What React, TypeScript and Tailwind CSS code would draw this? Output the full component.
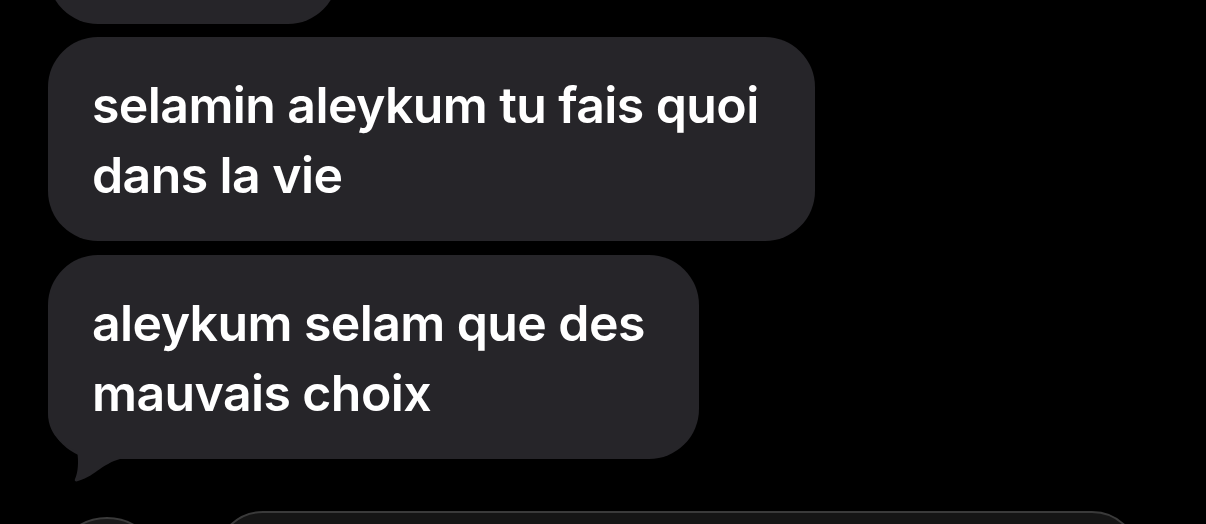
import React from 'react';

const bubble = 'bg-[#262529] text-white rounded-[50px] pl-[44px] pt-[33px] pb-[31px] text-[50px] leading-[70px] font-semibold tracking-[-0.6px]';

const Tail: React.FC = () => (
  <svg
    className="absolute left-0 bottom-[-24px]"
    width="80"
    height="80"
    viewBox="0 0 80 80"
  >
    <path
      d="M0 0 L0 10 C0 35 20 45 29 48 C31 58 30 70 27 76 C26 78 28 79 30 78 C40 75 46 70 49 68 C56 63 64 58 72 56 L72 0 Z"
      fill="#262529"
    />
  </svg>
);

const App: React.FC = () => {
  return (
    <div
      className="w-full h-[524px] bg-black overflow-hidden flex flex-col pl-[48px]"
      style={{ fontFamily: 'Inter, "Noto Sans", sans-serif' }}
    >
      {/* previous message, cut off at the top */}
      <div className="mt-[-76px] h-[100px] w-[290px] rounded-[50px] bg-[#262529] shrink-0" />

      <div className={`${bubble} mt-[13px] w-[767px] shrink-0`}>
        selamin aleykum tu fais quoi
        <br />
        dans la vie
      </div>

      <div className={`${bubble} relative mt-[14px] w-[651px] shrink-0`}>
        <Tail />
        <span className="relative">
          aleykum selam que des
          <br />
          mauvais choix
        </span>
      </div>

      {/* compose bar, mostly off screen */}
      <div className="flex items-start mt-[52px] shrink-0">
        <div className="ml-[4px] mt-[6px] w-[110px] h-[110px] rounded-full bg-[#1a1a1a] border-[2px] border-[#3a3a3a] shrink-0" />
        <div className="ml-[53px] w-[925px] h-[100px] rounded-[48px] bg-[#151515] border-[2px] border-[#3a3a3a] shrink-0" />
      </div>
    </div>
  );
};

export default App;
